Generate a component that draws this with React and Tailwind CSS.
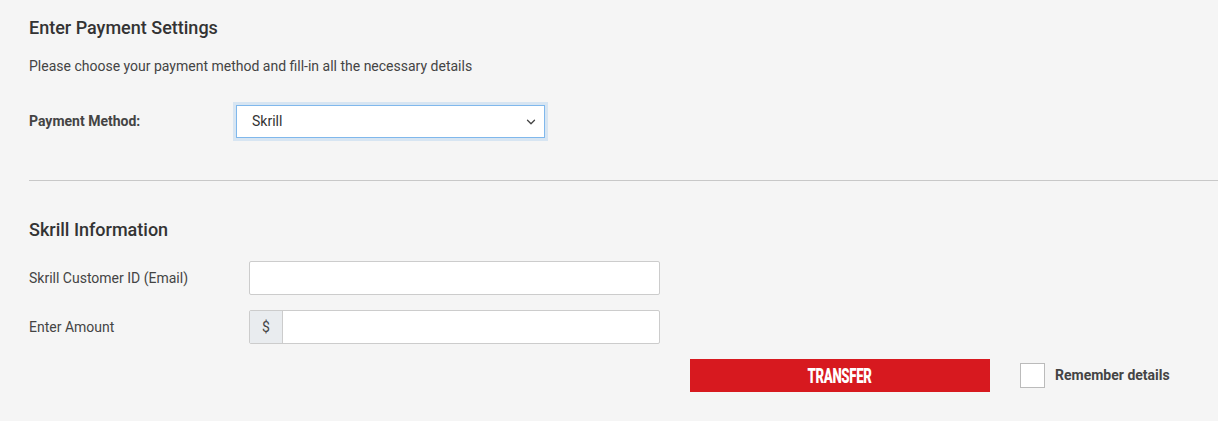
import { ChevronDown } from 'lucide-react'

const font = { fontFamily: 'Roboto, "Liberation Sans", sans-serif' }

function Field({ label, children }) {
  return (
    <div className="flex items-center">
      <label className="w-[220px] text-[14px] text-[#444]">{label}</label>
      <div className="w-[411px]">{children}</div>
    </div>
  )
}

export default function App() {
  return (
    <div style={font} className="bg-[#f5f5f5] h-[421px] pl-[29px] pt-[16px] text-[#333]">
      <h2 className="text-[18px] font-medium leading-6 text-[#333]">Enter Payment Settings</h2>
      <p className="mt-[16px] text-[14px] leading-5 text-[#444]">Please choose your payment method and fill-in all the necessary details</p>

      <div className="mt-[29px] flex items-center">
        <span className="w-[207px] text-[14px] font-bold text-[#444]">Payment Method:</span>
        <div className="relative w-[309px] h-[33px] bg-white border border-[#80b8ec] shadow-[0_0_0_3px_rgba(128,184,236,0.25)] flex items-center pl-[15px]">
          <span className="text-[14px] text-[#333]">Skrill</span>
          <ChevronDown size={14} strokeWidth={2.2} className="absolute right-[6px] top-[9px] text-[#444]" />
        </div>
      </div>

      <hr className="mt-[42px] border-0 border-t border-[#c8c8c8]" />

      <h3 className="mt-[37px] text-[18px] font-medium leading-6 text-[#333]">Skrill Information</h3>

      <div className="mt-[19px] flex flex-col gap-[15px]">
        <Field label="Skrill Customer ID (Email)">
          <div className="h-[34px] bg-white border border-[#ccc] rounded-[2px]" />
        </Field>
        <Field label="Enter Amount">
          <div className="h-[34px] flex border border-[#ccc] rounded-[2px] bg-white">
            <span className="w-[33px] flex items-center justify-center bg-[#e9ecef] border-r border-[#ccc] text-[14px] text-[#444]">$</span>
            <div className="flex-1" />
          </div>
        </Field>
      </div>

      <div className="mt-[15px] flex items-center">
        <div className="w-[661px]" />
        <button className="w-[300px] h-[33px] bg-[#d7191f] text-white flex items-center justify-center">
          <span className="inline-block scale-x-[0.66] text-[20px] font-black leading-none tracking-tight">TRANSFER</span>
        </button>
        <div className="ml-[30px] w-[25px] h-[25px] bg-white border border-[#bbb]" />
        <span className="ml-[10px] text-[14px] font-bold text-[#444]">Remember details</span>
      </div>
    </div>
  )
}
